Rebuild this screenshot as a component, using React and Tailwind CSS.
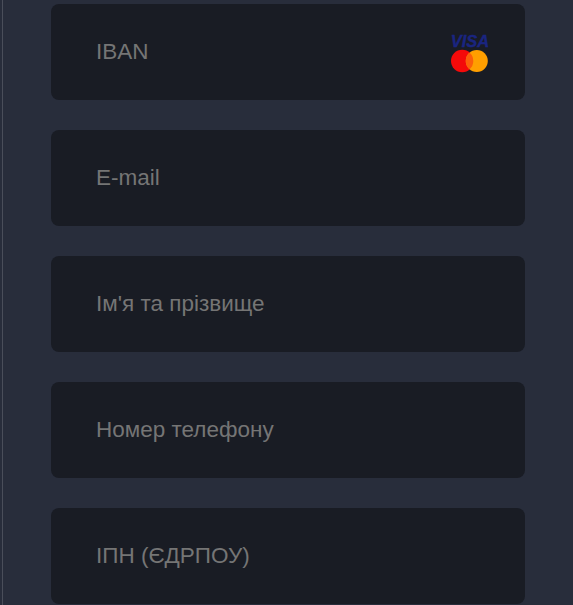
import React from "react";

const fields = ["IBAN", "E-mail", "Ім'я та прізвище", "Номер телефону", "ІПН (ЄДРПОУ)"];

function CardLogos() {
  return (
    <svg width="38" height="40" viewBox="0 0 38 40" className="absolute right-[36px] top-[29px]" aria-hidden>
      <text
        x="19"
        y="13.700"
        textAnchor="middle"
        fontFamily="'Liberation Sans', sans-serif"
        fontSize="16.500"
        fontWeight="700"
        fontStyle="italic"
        fill="#1a2580"
        stroke="#1a2580"
        strokeWidth="0.400"
      >
        VISA
      </text>
      <circle cx="11.200" cy="28" r="11.200" fill="#f40a0a" />
      <circle cx="25.800" cy="28" r="11" fill="#ff9f00" />
      <path d="M18.500 19.600a11.200 11.200 0 0 1 0 16.800a11.200 11.200 0 0 1 0-16.800z" fill="#fb5f0a" />
    </svg>
  );
}

export default function App() {
  return (
    <div className="h-[605px] w-full overflow-hidden bg-[#282d3b] pl-[2px] font-['Liberation_Sans',sans-serif]">
      <div className="h-full border-l border-[#4a4e5a] pl-[48px] pt-[4px]">
        <div className="flex w-[474px] flex-col gap-[30px]">
          {fields.map((label, i) => (
            <div key={label} className="relative h-[96px] shrink-0 rounded-lg bg-[#191c24]">
              <input
                type="text"
                placeholder={label}
                className="h-full w-full bg-transparent pl-[45px] pr-[90px] text-[22.500px] text-white outline-none placeholder:text-[#757575]"
              />
              {i === 0 && <CardLogos />}
            </div>
          ))}
        </div>
      </div>
    </div>
  );
}
